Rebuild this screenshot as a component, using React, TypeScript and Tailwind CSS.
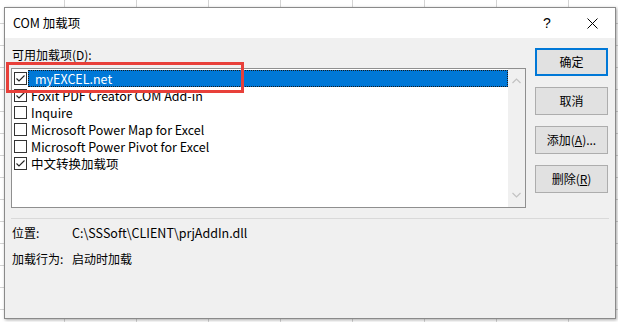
import React from "react";

const items = [
  { label: "myEXCEL.net", checked: true, selected: true },
  { label: "Foxit PDF Creator COM Add-in", checked: true, selected: false },
  { label: "Inquire", checked: false, selected: false },
  { label: "Microsoft Power Map for Excel", checked: false, selected: false },
  { label: "Microsoft Power Pivot for Excel", checked: false, selected: false },
  { label: "中文转换加载项", checked: true, selected: false },
];

function CheckBox({ checked }: { checked: boolean }) {
  return (
    <div className="w-[13px] h-[13px] border border-[#333333] bg-white shrink-0 flex items-center justify-center">
      {checked && (
        <svg width="11" height="11" viewBox="0 0 11 11">
          <path d="M1.5 5.5 L4 8 L9.5 2.5" fill="none" stroke="#222" strokeWidth="1.1" />
        </svg>
      )}
    </div>
  );
}

function Btn({ children, primary }: { children: React.ReactNode; primary?: boolean }) {
  return (
    <div
      className={
        "w-[73px] h-[28px] flex items-center justify-center bg-[#e1e1e1] text-[12px] text-black " +
        (primary ? "border-2 border-[#0078d7]" : "border border-[#adadad]")
      }
    >
      {children}
    </div>
  );
}

export default function App() {
  const vlines = [64, 136, 208, 280, 352, 424, 496, 568];
  const hlines = [23, 45, 67, 89, 111, 133, 155, 177, 199, 221, 243, 265, 287, 309];
  return (
    <div className="relative w-[618px] h-[322px] overflow-hidden bg-white font-['Noto_Sans_CJK_SC','Noto_Sans',sans-serif] text-black">
      <svg className="absolute inset-0" width="618" height="322">
        {vlines.map((x) => (
          <line key={x} x1={x + 0.5} y1="0" x2={x + 0.5} y2="322" stroke="#d4d4d4" />
        ))}
        {hlines.map((y) => (
          <line key={y} x1="0" y1={y + 0.5} x2="618" y2={y + 0.5} stroke="#d4d4d4" />
        ))}
      </svg>

      <div className="relative ml-[4px] mt-[7px] w-[612px] h-[312px] border border-[#8a8a8a] bg-[#f0f0f0] shadow-[1px_1px_3px_rgba(0,0,0,0.35)] flex flex-col">
        {/* title bar */}
        <div className="h-[30px] bg-white flex items-center shrink-0">
          <div className="pl-[8px] text-[12.5px] leading-none">COM 加载项</div>
          <div className="ml-auto w-[46px] h-full flex items-center justify-center text-[14px] font-['Liberation_Sans',sans-serif]">?</div>
          <div className="w-[45px] h-full flex items-center justify-center">
            <svg width="11" height="11" viewBox="0 0 11 11">
              <path d="M0.5 0.5 L10.5 10.5 M10.5 0.5 L0.5 10.5" stroke="#000" strokeWidth="1" />
            </svg>
          </div>
        </div>

        {/* body */}
        <div className="flex flex-col px-[6px]">
          <div className="flex gap-[9px]">
            <div className="w-[515px] flex flex-col">
              <div className="mt-[9px] ml-[1px] h-[16px] leading-[16px] text-[12px]">可用加载项(D):</div>
              <div className="mt-[5px] h-[140px] border border-[#8f8f8f] bg-white flex">
                <div className="flex-1 pt-[1px] pl-[2px] flex flex-col">
                  {items.map((it) => (
                    <div key={it.label} className="h-[17px] flex items-center">
                      <CheckBox checked={it.checked} />
                      {it.selected ? (
                        <div className="ml-[1px] flex-1 h-[17px] bg-[#0078d7] border border-dotted border-[#1a1a1a] text-white text-[12.5px] leading-[15px] pl-[6px]">
                          {it.label}
                        </div>
                      ) : (
                        <div className="ml-[4px] text-[12.5px] leading-[17px] whitespace-nowrap">{it.label}</div>
                      )}
                    </div>
                  ))}
                </div>
                <div className="w-[17px] bg-[#f0f0f0] flex flex-col items-center justify-between py-[9px]">
                  <svg width="9" height="6" viewBox="0 0 9 6">
                    <path d="M0.5 5 L4.5 1 L8.5 5" fill="none" stroke="#c2c2c2" strokeWidth="1.2" />
                  </svg>
                  <svg width="9" height="6" viewBox="0 0 9 6">
                    <path d="M0.5 1 L4.5 5 L8.5 1" fill="none" stroke="#c2c2c2" strokeWidth="1.2" />
                  </svg>
                </div>
              </div>
            </div>
            <div className="pt-[10px] flex flex-col gap-[11px]">
              <Btn primary>确定</Btn>
              <Btn>取消</Btn>
              <Btn>
                添加(<span className="underline">A</span>)...
              </Btn>
              <Btn>
                删除(<span className="underline">R</span>)
              </Btn>
            </div>
          </div>

          <div className="mt-[10px] h-px bg-[#d9d9d9] mr-[0px]" />

          <div className="mt-[6px] ml-[1px] flex h-[16px] items-center text-[12px]">
            <div className="w-[60px]">位置:</div>
            <div className="text-[12.5px]">C:\SSSoft\CLIENT\prjAddIn.dll</div>
          </div>
          <div className="mt-[10px] ml-[1px] flex h-[16px] items-center text-[12px]">
            <div className="w-[60px]">加载行为:</div>
            <div>启动时加载</div>
          </div>
        </div>
      </div>

      {/* annotation */}
      <div className="absolute left-[6px] top-[62px] w-[238px] h-[31px] border-[3px] border-[#e8403a]" />
    </div>
  );
}
